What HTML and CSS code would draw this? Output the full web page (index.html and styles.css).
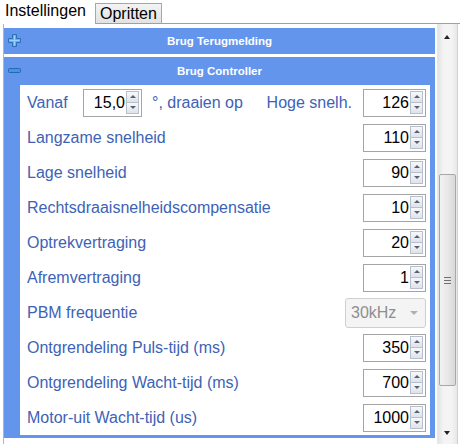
FILE: index.html
```html
<!DOCTYPE html>
<html lang="nl">

<head>
    <meta charset="UTF-8">
    <title>Instellingen</title>
    <link rel="stylesheet" href="styles.css">
</head>

<body>

    <div class="tabs">
        <div class="tab active">Instellingen</div>
        <div class="tab">Opritten</div>
        <div class="tab-fill"></div>
    </div>

    <div class="panel">
        <div class="scroll-area">

            <!-- ingeklapte groep -->
            <div class="group-head closed">
                <svg class="toggle" width="13" height="13" viewBox="0 0 13 13">
                    <path d="M4.5 0.5h4v4h4v4h-4v4h-4v-4h-4v-4h4z" fill="#5fb0f4" stroke="#2d6fb8" stroke-width="1"/>
                    <path d="M6.5 1.5v10M1.5 6.5h10" stroke="#9fd2fb" stroke-width="1"/>
                </svg>
                Brug Terugmelding
            </div>

            <!-- open groep -->
            <div class="group">
                <div class="group-head open">
                    <svg class="toggle minus" width="13" height="6" viewBox="0 0 13 6">
                        <rect x="0.5" y="0.5" width="12" height="4" rx="1" fill="#3f97e8" stroke="#2a66b0"/>
                    </svg>
                    Brug Controller
                </div>
                <div class="group-body">
                    <div class="row">
                        <span class="label short">Vanaf</span>
                        <div class="spin small"><span class="val">15,0</span><span class="arrows"><i class="up"></i><i class="down"></i></span></div>
                        <span class="label after">°, draaien op</span>
                        <span class="label right">Hoge snelh.</span>
                        <div class="spin"><span class="val">126</span><span class="arrows"><i class="up"></i><i class="down"></i></span></div>
                    </div>
                    <div class="row">
                        <span class="label">Langzame snelheid</span>
                        <div class="spin"><span class="val">110</span><span class="arrows"><i class="up"></i><i class="down"></i></span></div>
                    </div>
                    <div class="row">
                        <span class="label">Lage snelheid</span>
                        <div class="spin"><span class="val">90</span><span class="arrows"><i class="up"></i><i class="down"></i></span></div>
                    </div>
                    <div class="row">
                        <span class="label">Rechtsdraaisnelheidscompensatie</span>
                        <div class="spin"><span class="val">10</span><span class="arrows"><i class="up"></i><i class="down"></i></span></div>
                    </div>
                    <div class="row">
                        <span class="label">Optrekvertraging</span>
                        <div class="spin"><span class="val">20</span><span class="arrows"><i class="up"></i><i class="down"></i></span></div>
                    </div>
                    <div class="row">
                        <span class="label">Afremvertraging</span>
                        <div class="spin"><span class="val">1</span><span class="arrows"><i class="up"></i><i class="down"></i></span></div>
                    </div>
                    <div class="row">
                        <span class="label">PBM frequentie</span>
                        <div class="combo disabled"><span>30kHz</span><i class="caret"></i></div>
                    </div>
                    <div class="row">
                        <span class="label">Ontgrendeling Puls-tijd (ms)</span>
                        <div class="spin"><span class="val">350</span><span class="arrows"><i class="up"></i><i class="down"></i></span></div>
                    </div>
                    <div class="row">
                        <span class="label">Ontgrendeling Wacht-tijd (ms)</span>
                        <div class="spin"><span class="val">700</span><span class="arrows"><i class="up"></i><i class="down"></i></span></div>
                    </div>
                    <div class="row">
                        <span class="label">Motor-uit Wacht-tijd (us)</span>
                        <div class="spin"><span class="val">1000</span><span class="arrows"><i class="up"></i><i class="down"></i></span></div>
                    </div>
                </div>
            </div>

        </div>

        <!-- scrollbalk -->
        <div class="scrollbar">
            <div class="sb-btn"><i class="sb-up"></i></div>
            <div class="sb-track">
                <div class="sb-thumb"><span class="grip"></span></div>
            </div>
            <div class="sb-btn"><i class="sb-down"></i></div>
        </div>
    </div>

</body>

</html>
```

FILE: styles.css
```css
body {
    margin: 0;
    background: #fff;
    font-family: "Liberation Sans", Arial, sans-serif;
    overflow: hidden;
}

.tabs {
    display: flex;
    height: 24px;
}

.tab {
    font-size: 16px;
    line-height: 20px;
    padding: 0 5px;
    color: #000;
}

.tab.active {
    height: 24px;
    padding-top: 1px;
    box-sizing: border-box;
    width: 95px;
}

.tab:not(.active) {
    margin-top: 3px;
    height: 21px;
    box-sizing: border-box;
    border: 1px solid #a7a7a7;
    border-bottom: 1px solid #a0a0a0;
    background: linear-gradient(#f3f3f3, #e2e2e2);
    padding: 0 4px;
}

.tab-fill {
    flex: 1;
    border-bottom: 1px solid #a0a0a0;
}

.panel {
    display: flex;
    margin-left: 3px;
    width: 455px;
    height: 420px;
    box-sizing: border-box;
    border-left: 1px solid #b4b4b4;
    border-right: 1px solid #d0d0d0;
}

.scroll-area {
    width: 431px;
    padding-top: 4px;
}

.group-head {
    position: relative;
    background: #6495ed;
    color: #fff;
    font-weight: bold;
    font-size: 11.5px;
    text-align: center;
    height: 26px;
    line-height: 26px;
}

.group-head.closed {
    margin-bottom: 3px;
}

.group-head.open {
    height: 28px;
    line-height: 29px;
}

.toggle {
    position: absolute;
    left: 4px;
    top: 6px;
}

.toggle.minus {
    top: 11px;
}

.group {
    background: #6495ed;
    padding: 0 5px 3px 16px;
}

.group-head.open {
    margin: 0 -5px 0 -16px;
}

.group-body {
    background: #fff;
    padding: 0 4px 0 7px;
}

.row {
    display: flex;
    align-items: center;
    height: 35px;
}

.label {
    color: #3d62b6;
    font-size: 16px;
    flex: 1;
}

.label.short {
    flex: none;
    width: 56px;
}

.label.after {
    flex: none;
    margin-left: 10px;
}

.label.right {
    flex: none;
    margin-left: auto;
    margin-right: 11px;
}

.spin {
    display: flex;
    align-items: center;
    width: 63px;
    height: 28px;
    box-sizing: border-box;
    border: 1px solid #a5a5a5;
    padding: 0 2px 0 4px;
    background: #fff;
}

.spin.small {
    width: 59px;
}

.val {
    flex: 1;
    text-align: right;
    font-size: 16px;
    color: #000;
    padding-right: 1px;
}

.arrows {
    display: flex;
    flex-direction: column;
    width: 13px;
}

.arrows i {
    position: relative;
    display: block;
    height: 10px;
    border: 1px solid #b8bfcc;
    background: linear-gradient(#f7f8fb, #dfe3ea);
    box-sizing: content-box;
    width: 11px;
}

.arrows i.up {
    border-bottom: none;
}

.arrows i::after {
    content: "";
    position: absolute;
    left: 3px;
    top: 3px;
    border-left: 3px solid transparent;
    border-right: 3px solid transparent;
}

.arrows i.up::after {
    border-bottom: 3px solid #5a6070;
}

.arrows i.down::after {
    border-top: 3px solid #5a6070;
}

.combo {
    position: relative;
    width: 81px;
    height: 30px;
    box-sizing: border-box;
    border: 1px solid #cfcfcf;
    border-radius: 3px;
    background: #f4f4f4;
    font-size: 16px;
    color: #8e8e8e;
    line-height: 28px;
    padding-left: 5px;
}

.caret {
    position: absolute;
    right: 7px;
    top: 12px;
    border-left: 4px solid transparent;
    border-right: 4px solid transparent;
    border-top: 4px solid #b0b0b0;
}

.scrollbar {
    display: flex;
    flex-direction: column;
    width: 19px;
    margin-left: 2px;
    background: linear-gradient(90deg, #e4e4e4, #f4f4f4 30%, #f4f4f4 70%, #e8e8e8);
    border-left: 1px solid #e6e6e6;
}

.sb-btn {
    position: relative;
    height: 20px;
}

.sb-btn i {
    position: absolute;
    left: 6px;
    border-left: 3px solid transparent;
    border-right: 3px solid transparent;
}

.sb-up {
    top: 11px;
    border-bottom: 4px solid #222;
}

.sb-down {
    top: 7px;
    border-top: 4px solid #222;
}

.sb-track {
    flex: 1;
    padding-top: 130px;
}

.sb-thumb {
    display: flex;
    align-items: center;
    justify-content: center;
    height: 210px;
    margin: 0 1px;
    border: 1px solid #a8a8a8;
    border-radius: 2px;
    background: linear-gradient(90deg, #f2f2f2, #e8e8e8 50%, #d8d8d8);
}

.grip {
    width: 7px;
    height: 5px;
    border-top: 1px solid #707070;
    border-bottom: 1px solid #707070;
    position: relative;
}

.grip::after {
    content: "";
    position: absolute;
    left: 0;
    right: 0;
    top: 2px;
    border-top: 1px solid #707070;
}
```
